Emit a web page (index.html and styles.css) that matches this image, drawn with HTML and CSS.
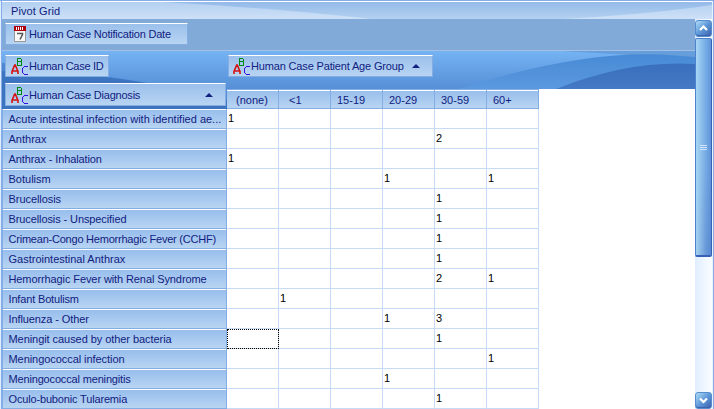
FILE: index.html
```html
<!DOCTYPE html>
<html lang="en">
<head>
<meta charset="utf-8">
<title>Pivot Grid</title>
<link rel="stylesheet" href="styles.css">
</head>
<body>
<svg class="defs" width="0" height="0" aria-hidden="true">
  <symbol id="abc" viewBox="0 0 17 18">
    <path d="M1 17v-2.500l2.700-6.500h.6L7 14.500V17M1.500 14h5" fill="none" stroke="#d41414" stroke-width="1.600"/>
    <g shape-rendering="crispEdges" fill="none">
      <path d="M6.500 1v8M6 1.500h4M10.500 2v3M6 4.500h4M10.500 5v3M6 8.500h5" stroke="#008a12"/>
      <path d="M13 9.500h4M12.500 10v1M11.500 11v5M12.500 16v1M13 17.500h4" stroke="#3512dc"/>
    </g>
  </symbol>
</svg>
<div class="panel">
  <header class="title">
    <svg class="wave" viewBox="0 0 710 17" preserveAspectRatio="none">
      <defs><linearGradient id="light" x1="0" y1="0" x2="0" y2="1"><stop offset="0" stop-color="#b4d0f1"/><stop offset="1" stop-color="#cde0f7"/></linearGradient></defs>
      <path fill="url(#light)" d="M0 0H160Q270 6 370 17H0zM560 17Q650 12 710 3V17z"/>
    </svg>
    <span>Pivot Grid</span>
  </header>
  <div class="body">
    <main class="pivot">
      <div class="filters">
        <div class="field date t20">
          <svg class="cal" viewBox="0 0 12 16"><path d="M.5 4.500h11v11H.5z" fill="#f8f8f8" stroke="#999"/><path d="M0 0h12v5H0z" fill="#b00008"/><path d="M2.500 1v3M4.500 1v3M6.500 1v3M8.500 1v3" stroke="#fff"/><path d="M3 7.500h5.500v1L6 13.500" fill="none" stroke="#555" stroke-width="1.500"/></svg>
          <span>Human Case Notification Date</span>
        </div>
      </div>
      <div class="fields">
        <svg class="wave" viewBox="0 0 693 58" preserveAspectRatio="none">
          <defs>
            <linearGradient id="sky" x1="0" y1="0" x2="0" y2="1"><stop offset="0" stop-color="#75b3f3"/><stop offset=".65" stop-color="#568fd7"/><stop offset="1" stop-color="#4b84cc"/></linearGradient>
            <linearGradient id="mid" x1="0" y1="0" x2="0" y2="1"><stop offset="0" stop-color="#478ad5"/><stop offset="1" stop-color="#5b99df"/></linearGradient>
            <linearGradient id="deep" x1="0" y1="0" x2="0" y2="1"><stop offset="0" stop-color="#396fbc"/><stop offset="1" stop-color="#4379c5"/></linearGradient>
          </defs>
          <path d="M0 0H693V58H0z" fill="url(#sky)"/>
          <path d="M560 0H693V8Q630 4 560 0z" fill="#659edb"/>
          <path d="M0 12Q100 22 210 44V58H0z" fill="#4c87d0"/>
          <path d="M0 20Q90 22 150 33L226 50V58H0z" fill="#3c74c0"/>
          <path d="M456 38Q575 0 660 3.500L693 6V38z" fill="url(#mid)"/>
          <path d="M554 38Q626 9 693 13V38z" fill="url(#deep)"/>
        </svg>
        <div class="left">
          <div class="field id t30"><svg class="abc"><use href="#abc"/></svg><span>Human Case ID</span></div>
          <div class="field diagnosis t20"><svg class="abc"><use href="#abc"/></svg><span>Human Case Diagnosis</span><i class="sort"></i></div>
        </div>
        <div class="right">
          <div class="field age t15"><svg class="abc"><use href="#abc"/></svg><span>Human Case Patient Age Group</span><i class="sort"></i></div>
          <div class="columns">
            <b class="none">(none)</b><b class="under">&lt;1</b><b>15-19</b><b>20-29</b><b>30-59</b><b>60+</b>
          </div>
        </div>
      </div>
      <div class="rows">
        <div class="row"><b>Acute intestinal infection with identified ae...</b><i>1</i><i></i><i></i><i></i><i></i><i></i></div>
        <div class="row"><b>Anthrax</b><i></i><i></i><i></i><i></i><i>2</i><i></i></div>
        <div class="row"><b class="t10">Anthrax - Inhalation</b><i>1</i><i></i><i></i><i></i><i></i><i></i></div>
        <div class="row"><b>Botulism</b><i></i><i></i><i></i><i>1</i><i></i><i>1</i></div>
        <div class="row"><b class="t5">Brucellosis</b><i></i><i></i><i></i><i></i><i>1</i><i></i></div>
        <div class="row"><b class="t10">Brucellosis - Unspecified</b><i></i><i></i><i></i><i></i><i>1</i><i></i></div>
        <div class="row"><b class="t20">Crimean-Congo Hemorrhagic Fever (CCHF)</b><i></i><i></i><i></i><i></i><i>1</i><i></i></div>
        <div class="row"><b>Gastrointestinal Anthrax</b><i></i><i></i><i></i><i></i><i>1</i><i></i></div>
        <div class="row"><b class="t10">Hemorrhagic Fever with Renal Syndrome</b><i></i><i></i><i></i><i></i><i>2</i><i>1</i></div>
        <div class="row"><b class="t15">Infant Botulism</b><i></i><i>1</i><i></i><i></i><i></i><i></i></div>
        <div class="row"><b class="t10">Influenza - Other</b><i></i><i></i><i></i><i>1</i><i>3</i><i></i></div>
        <div class="row"><b class="t5">Meningit caused by other bacteria</b><i class="focus"></i><i></i><i></i><i></i><i>1</i><i></i></div>
        <div class="row"><b class="t5">Meningococcal infection</b><i></i><i></i><i></i><i></i><i></i><i>1</i></div>
        <div class="row"><b class="t15">Meningococcal meningitis</b><i></i><i></i><i></i><i>1</i><i></i><i></i></div>
        <div class="row"><b class="t15">Oculo-bubonic Tularemia</b><i></i><i></i><i></i><i></i><i>1</i><i></i></div>
      </div>
    </main>
    <aside class="scrollbar">
      <div class="arrow"><svg viewBox="0 0 15 15"><path d="M4 9l3.500-3.500L11 9"/></svg></div>
      <div class="thumb"><span></span><span></span><span></span></div>
      <div class="arrow down"><svg viewBox="0 0 15 15"><path d="M4 5.500L7.500 9 11 5.500"/></svg></div>
    </aside>
  </div>
</div>
</body>
</html>
```
FILE: styles.css
```css
* { box-sizing: border-box; }
body { margin: 0; overflow: hidden; background: #fff; font: 11px/14px "Liberation Sans", Arial, sans-serif; color: #10217f; }
b, i { font-weight: normal; font-style: normal; }
.defs { position: absolute; }
.panel { width: 714px; height: 409px; border-top: 1px solid #85ace6; padding: 1px 2px 0; background: linear-gradient(90deg, #e0efff 1px, #85ace6 1px 2px, #fff 2px 712px, #e8f3ff 712px 713px, #85ace6 713px); }
.title { position: relative; height: 17px; padding: 2px 9px; background: linear-gradient(#94bae9, #b4d2f1); overflow: hidden; }
.title span { position: relative; letter-spacing: 0.1px; }
.wave { position: absolute; inset: 0; width: 100%; height: 100%; }
.body { display: flex; height: 390px; }
.pivot { width: 693px; }
.filters { height: 32px; padding: 4px 3px; background: #82aad9; border-bottom: 1px solid #a4c0e6; }
.field { display: flex; align-items: center; height: 22px; border: 1px solid #84ade4; border-top-color: #fff; background: linear-gradient(#9bc0ec, #b8d4f2); white-space: nowrap; }
.date { width: 183px; padding-left: 8px; }
.cal { flex: none; width: 12px; height: 16px; margin-right: 3px; }
.abc { flex: none; width: 17px; height: 18px; margin: 0 1px 0 5px; }
.fields { position: relative; display: flex; height: 58px; }
.left, .right { position: relative; }
.left { width: 225px; padding: 4px 0 0 3px; }
.id { width: 104px; }
.diagnosis { width: 221px; height: 23px; margin-top: 6px; }
.sort { border: 4px solid transparent; border-top: 0; border-bottom-color: #10217f; margin: 0 12px 0 auto; }
.right { width: 468px; padding-top: 4px; }
.age { width: 205px; margin-left: 1px; }
.age .abc { margin-left: 4px; }
.columns { display: flex; height: 20px; margin-top: 12px; background: linear-gradient(90deg, transparent 312px, #fff 312px); }
.columns b { width: 52px; height: 20px; padding: 3px 6px; border: solid #84ade4; border-width: 1px 1px 1px 0; background: linear-gradient(#fff 1px, #99bfec 1px, #b8d4f2); }
.columns .none { padding-left: 9px; }
.columns .under { padding-left: 10px; }
.row { display: flex; height: 20px; }
.row b { width: 225px; padding: 3px 0 0 5.5px; border: solid #84ade4; border-width: 0 1px 1px 1px; background: linear-gradient(#fff 1px, #98beed 1px, #b8d4f2); white-space: nowrap; }
.row i { width: 52px; padding: 2px 0 0 1px; border: solid #c7dbf7; border-width: 0 1px 1px 0; color: #000; }
.row .focus { outline: 1px dotted #000; outline-offset: -1px; }

/* Tracking steps, in hundredths of a pixel */
.t5 { letter-spacing: -0.06px; }
.t10 { letter-spacing: -0.1px; }
.t15 { letter-spacing: -0.16px; }
.t20 { letter-spacing: -0.22px; }
.t30 { letter-spacing: -0.3px; }

.scrollbar { display: flex; flex-direction: column; width: 17px; padding-top: 1px; background: linear-gradient(90deg, #e1eeff, #fafdff); }
.arrow { height: 17px; border: 1px solid #568bce; border-radius: 3px; background: linear-gradient(135deg, #afdcf8, #5e98d8 50%, #3b5fad); box-shadow: inset 0 -1px #3c63ad; }
.arrow svg { display: block; width: 15px; height: 15px; fill: none; stroke: #fff; stroke-width: 2.2; }
.thumb { display: flex; flex-direction: column; align-items: center; justify-content: center; gap: 1px; height: 219px; margin-top: 1px; border: 1px solid #4e82ce; border-right-color: #3860b6; border-bottom: 2px solid #3860b6; border-radius: 2px; background: linear-gradient(90deg, rgba(190,233,250,.7), transparent 65%, rgba(65,115,200,.4)), linear-gradient(#75ace6, #76aae4 60%, #6798d8); }
.thumb span { width: 7px; height: 1px; background: #cee4fc; }
.down { margin-top: auto; }
```
